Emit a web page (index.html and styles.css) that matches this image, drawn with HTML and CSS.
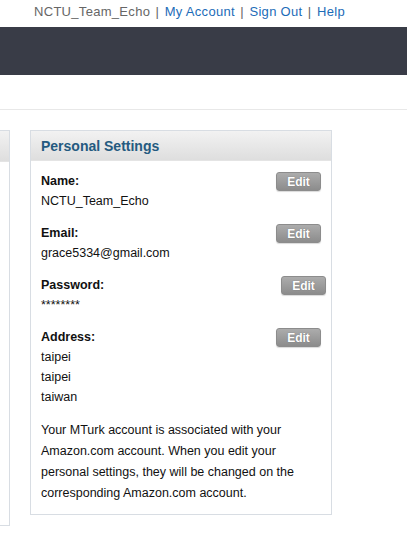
FILE: index.html
```html
<!DOCTYPE html>
<html>
<head>
<meta charset="utf-8">
<link rel="stylesheet" href="styles.css">
</head>
<body>
<div class="toplinks">
  <span class="user">NCTU_Team_Echo</span> <span class="sep">|</span> <a href="#">My Account</a> <span class="sep">|</span> <a href="#">Sign Out</a> <span class="sep">|</span> <a href="#">Help</a>
</div>
<div class="darkbar"></div>
<div class="subnav"></div>
<div class="content">
  <div class="panel panel-left">
    <div class="panel-head"></div>
  </div>
  <div class="panel panel-main">
    <div class="panel-head"><h2 class="panel-title">Personal Settings</h2></div>
    <div class="panel-body">
      <div class="field">
        <div class="field-row"><span class="label">Name:</span><button class="edit">Edit</button></div>
        <div class="value">NCTU_Team_Echo</div>
      </div>
      <div class="field">
        <div class="field-row"><span class="label">Email:</span><button class="edit">Edit</button></div>
        <div class="value">grace5334@gmail.com</div>
      </div>
      <div class="field">
        <div class="field-row"><span class="label">Password:</span><button class="edit edit-shift">Edit</button></div>
        <div class="value">********</div>
      </div>
      <div class="field">
        <div class="field-row"><span class="label">Address:</span><button class="edit">Edit</button></div>
        <div class="value">taipei</div>
        <div class="value">taipei</div>
        <div class="value">taiwan</div>
      </div>
      <p class="note">Your MTurk account is associated with your Amazon.com account. When you edit your personal settings, they will be changed on the corresponding Amazon.com account.</p>
    </div>
  </div>
</div>
</body>
</html>
```
FILE: styles.css
```css
html, body {
  margin: 0;
  padding: 0;
  background: #ffffff;
  font-family: "Liberation Sans", Arial, Helvetica, sans-serif;
  color: #111;
}

.toplinks {
  height: 27px;
  box-sizing: border-box;
  padding-left: 34px;
  line-height: 23px;
  font-size: 13px;
  letter-spacing: 0.3px;
  color: #666;
  white-space: nowrap;
}

.toplinks a {
  color: #1c6cb8;
  text-decoration: none;
}

.toplinks .sep {
  color: #666;
  margin: 0 1.5px;
}

.darkbar {
  height: 48px;
  background: #393c47;
}

.subnav {
  height: 34px;
  border-bottom: 1px solid #e8e8e8;
}

.content {
  display: flex;
  align-items: flex-start;
  gap: 20px;
  padding-top: 20px;
}

.panel {
  box-sizing: border-box;
  border: 1px solid #d8dde3;
  background: #fff;
}

.panel-left {
  width: 10px;
  height: 396px;
  border-left: none;
}

.panel-main {
  width: 302px;
}

.panel-head {
  height: 30px;
  background: linear-gradient(#f2f2f2, #dedede);
  border-bottom: 1px solid #e4e4e4;
  box-sizing: border-box;
}

.panel-left .panel-head {
  height: 31px;
}

.panel-title {
  margin: 0;
  padding-left: 10px;
  font-size: 14px;
  line-height: 30px;
  font-weight: bold;
  color: #245a80;
}

.panel-body {
  padding: 10px 10px 10px 10px;
  font-size: 12.5px;
}

.field {
  margin-bottom: 12px;
}

.field-row {
  display: flex;
  justify-content: space-between;
  align-items: center;
  height: 20px;
}

.label {
  font-weight: bold;
  line-height: 20px;
}

.value {
  line-height: 20px;
}

.edit {
  width: 45px;
  height: 19px;
  margin: 1px 0 0 0;
  padding: 0;
  border: 1px solid #8c8c8c;
  border-radius: 3px;
  background: linear-gradient(#acacac, #8c8c8c);
  color: #fff;
  font-family: "Liberation Sans", Arial, sans-serif;
  font-size: 12px;
  font-weight: bold;
  text-shadow: 0 0 1px #666;
  box-shadow: 0 1px 1px rgba(0,0,0,0.15);
}

.edit-shift {
  margin-right: -5px;
}

.note {
  margin: 13px 0 0 0;
  line-height: 21px;
}
```
